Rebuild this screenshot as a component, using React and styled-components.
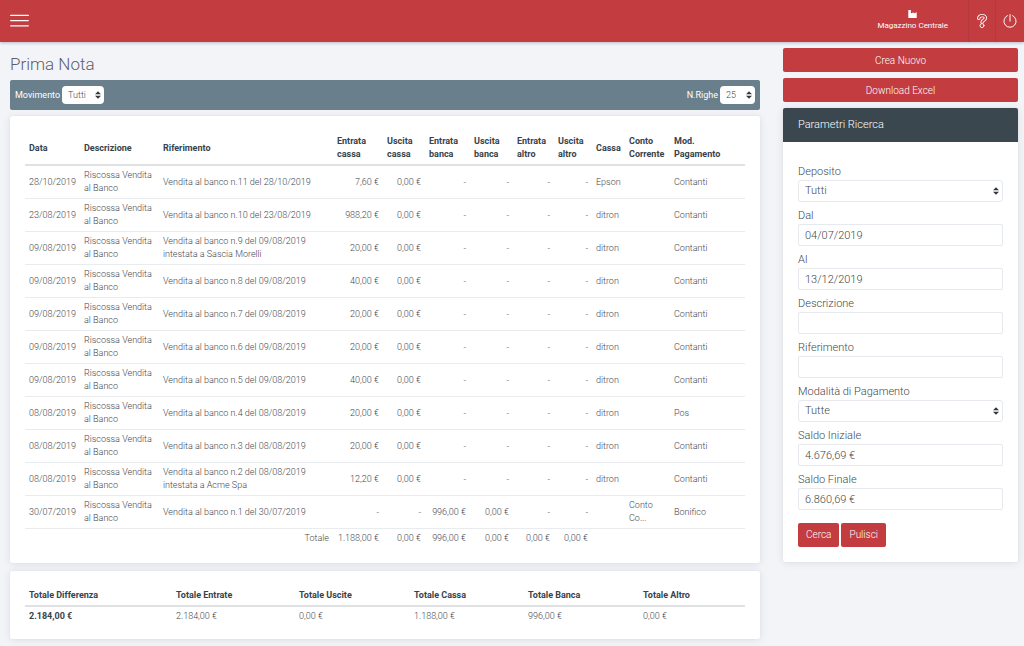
import React from 'react';
import styled, { createGlobalStyle, css } from 'styled-components';

const GlobalStyle = createGlobalStyle`
  *, *::before, *::after {
    box-sizing: border-box;
  }
  body {
    margin: 0;
    background: #f2f4f8;
    color: #3f484e;
    font-family: Roboto, 'Liberation Sans', sans-serif;
    font-size: 9px;
    font-weight: 300;
    line-height: 13px;
  }
  button, input, select {
    font: inherit;
    color: inherit;
  }
`;

const arrows = `url("data:image/svg+xml,%3csvg xmlns='http://www.w3.org/2000/svg' viewBox='0 0 4 5'%3e%3cpath fill='%23343a40' d='M2 0L0 2h4zm0 5L0 3h4z'/%3e%3c/svg%3e")`;

const cardShadow = '0 1px 8px rgba(8, 10, 55, 0.09), 0 0 2px rgba(8, 10, 55, 0.06)';

const Header = styled.header`
  display: flex;
  justify-content: space-between;
  height: 42px;
  background: #c23c40;
  color: #fff;
  box-shadow: 0 1px 3px rgba(8, 10, 55, 0.25);
`;

const IconButton = styled.button`
  display: flex;
  align-items: center;
  justify-content: center;
  width: ${({ $width }) => $width}px;
  padding: 0;
  border: 0;
  border-left: ${({ $divided }) => ($divided ? '1px solid #b5383c' : '0')};
  background: transparent;
  color: #fff;
  cursor: pointer;
`;

const HeaderRight = styled.div`
  display: flex;
`;

const Store = styled.a`
  display: flex;
  flex-direction: column;
  align-items: center;
  justify-content: center;
  gap: 1px;
  padding: 0 20px;
  color: #fff;
  font-size: 8px;
  font-weight: 400;
  text-decoration: none;
`;

const Page = styled.div`
  display: grid;
  grid-template-columns: minmax(0, 1fr) 235px;
  align-items: start;
  gap: 23px;
  padding: 6px 6px 6px 10px;
`;

const Main = styled.main`
  display: flex;
  flex-direction: column;
`;

const Title = styled.h1`
  margin: 5px 0;
  color: #5d5f6e;
  font-size: 17px;
  font-weight: 300;
  line-height: 22px;
`;

const Toolbar = styled.div`
  display: flex;
  align-items: center;
  justify-content: space-between;
  height: 30px;
  margin-bottom: 6px;
  padding: 0 5px;
  border-radius: 2px;
  background: #697f8b;
`;

const ToolbarLabel = styled.label`
  display: flex;
  align-items: center;
  gap: 2px;
  color: #fff;
  font-weight: 400;
`;

const selectArrows = css`
  appearance: none;
  background: #fff ${arrows} no-repeat right 3px center / 6px 8px;
`;

const ToolbarSelect = styled.select`
  ${selectArrows}
  width: ${({ $width }) => $width}px;
  height: 18px;
  padding: 0 6px;
  border: 0;
  border-radius: 4px;
  color: #3f484e;
  font-weight: 300;
`;

const Card = styled.section`
  margin-bottom: 8px;
  padding: ${({ $padding }) => $padding};
  border-radius: 2px;
  background: #fff;
  box-shadow: ${cardShadow};
`;

const Table = styled.table`
  width: 100%;
  table-layout: fixed;
  border-collapse: separate;
  border-spacing: 0;
`;

const Th = styled.th`
  padding: 3px 4px;
  border-bottom: 2px solid #dfe1e3;
  color: #37424a;
  font-weight: 700;
  text-align: left;
`;

const Td = styled.td`
  padding: 3px 4px;
  border-bottom: ${({ $last }) => ($last ? '0' : '1px solid #e9ecef')};
  text-align: ${({ $right }) => ($right ? 'right' : 'left')};
  font-weight: ${({ $bold }) => ($bold ? 700 : 300)};
  color: ${({ $bold }) => ($bold ? '#37424a' : 'inherit')};
`;

const Side = styled.aside`
  display: flex;
  flex-direction: column;
  gap: 6px;
`;

const Button = styled.button`
  height: 24px;
  padding: 0 8px;
  border: 0;
  border-radius: 2px;
  background: #c23c40;
  color: #fff;
  font-size: 10px;
  font-weight: 300;
  cursor: pointer;
`;

const Panel = styled.section`
  border-radius: 2px;
  background: #fff;
  box-shadow: ${cardShadow};
`;

const PanelTitle = styled.h2`
  margin: 0;
  padding: 10px 15px;
  border-radius: 2px 2px 0 0;
  background: #3b474f;
  color: #fff;
  font-size: 11px;
  font-weight: 300;
  line-height: 14px;
`;

const Form = styled.form`
  display: flex;
  flex-direction: column;
  gap: 6px;
  padding: 22px 15px 15px;
  font-size: 11px;
  line-height: 16px;
`;

const Field = styled.div`
  display: flex;
  flex-direction: column;
`;

const Input = styled.input`
  width: 100%;
  height: 22px;
  padding: 0 6px;
  border: 1px solid #e6e9ee;
  border-radius: 2px;
  background: #fff;
`;

const Select = styled.select`
  ${selectArrows}
  width: 100%;
  height: 22px;
  padding: 0 6px;
  border: 1px solid #e6e9ee;
  border-radius: 3px;
`;

const Actions = styled.div`
  display: flex;
  gap: 2px;
  padding-top: 7px;
`;

const columns = [
  { label: 'Data', width: 55 },
  { label: 'Descrizione', width: 79 },
  { label: 'Riferimento', width: 174 },
  { label: 'Entrata cassa', width: 50, right: true },
  { label: 'Uscita cassa', width: 42, right: true },
  { label: 'Entrata banca', width: 45, right: true },
  { label: 'Uscita banca', width: 43, right: true },
  { label: 'Entrata altro', width: 41, right: true },
  { label: 'Uscita altro', width: 38, right: true },
  { label: 'Cassa', width: 33 },
  { label: 'Conto Corrente', width: 45 },
  { label: 'Mod. Pagamento', width: 75 },
];

const sale = (date, ref, amount, till, payment = 'Contanti') => [
  date, 'Riscossa Vendita al Banco', `Vendita al banco ${ref}`, amount, '0,00 €', '-', '-', '-', '-', till, '', payment,
];

const rows = [
  sale('28/10/2019', 'n.11 del 28/10/2019', '7,60 €', 'Epson'),
  sale('23/08/2019', 'n.10 del 23/08/2019', '988,20 €', 'ditron'),
  sale('09/08/2019', 'n.9 del 09/08/2019 intestata a Sascia Morelli', '20,00 €', 'ditron'),
  sale('09/08/2019', 'n.8 del 09/08/2019', '40,00 €', 'ditron'),
  sale('09/08/2019', 'n.7 del 09/08/2019', '20,00 €', 'ditron'),
  sale('09/08/2019', 'n.6 del 09/08/2019', '20,00 €', 'ditron'),
  sale('09/08/2019', 'n.5 del 09/08/2019', '40,00 €', 'ditron'),
  sale('08/08/2019', 'n.4 del 08/08/2019', '20,00 €', 'ditron', 'Pos'),
  sale('08/08/2019', 'n.3 del 08/08/2019', '20,00 €', 'ditron'),
  sale('08/08/2019', 'n.2 del 08/08/2019 intestata a Acme Spa', '12,20 €', 'ditron'),
  ['30/07/2019', 'Riscossa Vendita al Banco', 'Vendita al banco n.1 del 30/07/2019', '-', '-', '996,00 €', '0,00 €', '-', '-', '', 'Conto Co...', 'Bonifico'],
];

const totals = ['1.188,00 €', '0,00 €', '996,00 €', '0,00 €', '0,00 €', '0,00 €'];

const summary = [
  { label: 'Totale Differenza', value: '2.184,00 €', width: 147 },
  { label: 'Totale Entrate', value: '2.184,00 €', width: 123 },
  { label: 'Totale Uscite', value: '0,00 €', width: 115 },
  { label: 'Totale Cassa', value: '1.188,00 €', width: 114 },
  { label: 'Totale Banca', value: '996,00 €', width: 115 },
  { label: 'Totale Altro', value: '0,00 €', width: 106 },
];

const fields = [
  { id: 'deposito', label: 'Deposito', options: ['Tutti'] },
  { id: 'dal', label: 'Dal', value: '04/07/2019' },
  { id: 'al', label: 'Al', value: '13/12/2019' },
  { id: 'descrizione', label: 'Descrizione', value: '' },
  { id: 'riferimento', label: 'Riferimento', value: '' },
  { id: 'pagamento', label: 'Modalità di Pagamento', options: ['Tutte'] },
  { id: 'saldo-iniziale', label: 'Saldo Iniziale', value: '4.676,69 €' },
  { id: 'saldo-finale', label: 'Saldo Finale', value: '6.860,69 €' },
];

const MenuIcon = () => (
  <svg width="19" height="14" viewBox="0 0 19 14" stroke="currentColor" strokeWidth="1.3" strokeLinecap="round">
    <path d="M.7 1.4h17.6M.7 6.6h17.6M.7 11.8h17.6" />
  </svg>
);

const FactoryIcon = () => (
  <svg width="9" height="8" viewBox="0 0 9 8" fill="currentColor">
    <path d="M.3 0h2.6v3.6L5.7 2.2v1.4l3-1.4V8H.3z" />
  </svg>
);

const hook = 'M2.8 5.4C2.6 1.8 9.4 1.6 9.4 5.1 9.4 7.4 6.1 7 6.1 9.2';

// The hook is a wide line with a narrower one in the bar colour over it
const HelpIcon = () => (
  <svg width="12" height="16" viewBox="0 0 12 16" fill="none" strokeLinecap="round">
    <path d={hook} stroke="currentColor" strokeWidth="3.4" />
    <circle cx="6" cy="12.6" r="2" fill="#c23c40" stroke="currentColor" strokeWidth=".9" />
    <path d={hook} stroke="#c23c40" strokeWidth="1.6" />
  </svg>
);

const PowerIcon = () => (
  <svg width="14" height="14" viewBox="0 0 14 14" fill="none" stroke="currentColor" strokeWidth="1" strokeLinecap="round">
    <path d="M7 .6v6.6M4.4 1.6a6.1 6.1 0 1 0 5.2 0" />
  </svg>
);

const Movements = () => (
  <Table>
    <colgroup>
      {columns.map(c => <col key={c.label} style={{ width: c.width }} />)}
    </colgroup>
    <thead>
      <tr>{columns.map(c => <Th key={c.label} scope="col">{c.label}</Th>)}</tr>
    </thead>
    <tbody>
      {rows.map((row, i) => (
        <tr key={i}>
          {row.map((cell, j) => <Td key={j} $right={columns[j].right}>{cell}</Td>)}
        </tr>
      ))}
    </tbody>
    <tfoot>
      <tr>
        <Td colSpan={3} $right $last>Totale</Td>
        {totals.map((total, i) => <Td key={i} $right $last>{total}</Td>)}
        <Td colSpan={3} $last />
      </tr>
    </tfoot>
  </Table>
);

const Summary = () => (
  <Table>
    <colgroup>
      {summary.map(s => <col key={s.label} style={{ width: s.width }} />)}
    </colgroup>
    <thead>
      <tr>{summary.map(s => <Th key={s.label} scope="col">{s.label}</Th>)}</tr>
    </thead>
    <tbody>
      <tr>{summary.map((s, i) => <Td key={s.label} $bold={i === 0} $last>{s.value}</Td>)}</tr>
    </tbody>
  </Table>
);

const SearchForm = () => (
  <Panel>
    <PanelTitle>Parametri Ricerca</PanelTitle>
    <Form onSubmit={e => e.preventDefault()}>
      {fields.map(({ id, label, options, value }) => (
        <Field key={id}>
          <label htmlFor={id}>{label}</label>
          {options
            ? <Select id={id}>{options.map(o => <option key={o}>{o}</option>)}</Select>
            : <Input id={id} type="text" defaultValue={value} />}
        </Field>
      ))}
      <Actions>
        <Button type="submit">Cerca</Button>
        <Button type="reset">Pulisci</Button>
      </Actions>
    </Form>
  </Panel>
);

const App = () => (
  <>
    <GlobalStyle />
    <Header>
      <IconButton $width={39} aria-label="Menu"><MenuIcon /></IconButton>
      <HeaderRight>
        <Store href="#"><FactoryIcon />Magazzino Centrale</Store>
        <IconButton $width={27} $divided aria-label="Aiuto"><HelpIcon /></IconButton>
        <IconButton $width={29} $divided aria-label="Esci"><PowerIcon /></IconButton>
      </HeaderRight>
    </Header>
    <Page>
      <Main>
        <Title>Prima Nota</Title>
        <Toolbar>
          <ToolbarLabel>
            Movimento
            <ToolbarSelect $width={42}><option>Tutti</option></ToolbarSelect>
          </ToolbarLabel>
          <ToolbarLabel>
            N.Righe
            <ToolbarSelect $width={35}><option>25</option></ToolbarSelect>
          </ToolbarLabel>
        </Toolbar>
        <Card $padding="16px 15px 15px"><Movements /></Card>
        <Card $padding="15px 15px 13px"><Summary /></Card>
      </Main>
      <Side>
        <Button>Crea Nuovo</Button>
        <Button>Download Excel</Button>
        <SearchForm />
      </Side>
    </Page>
  </>
);

export default App;
